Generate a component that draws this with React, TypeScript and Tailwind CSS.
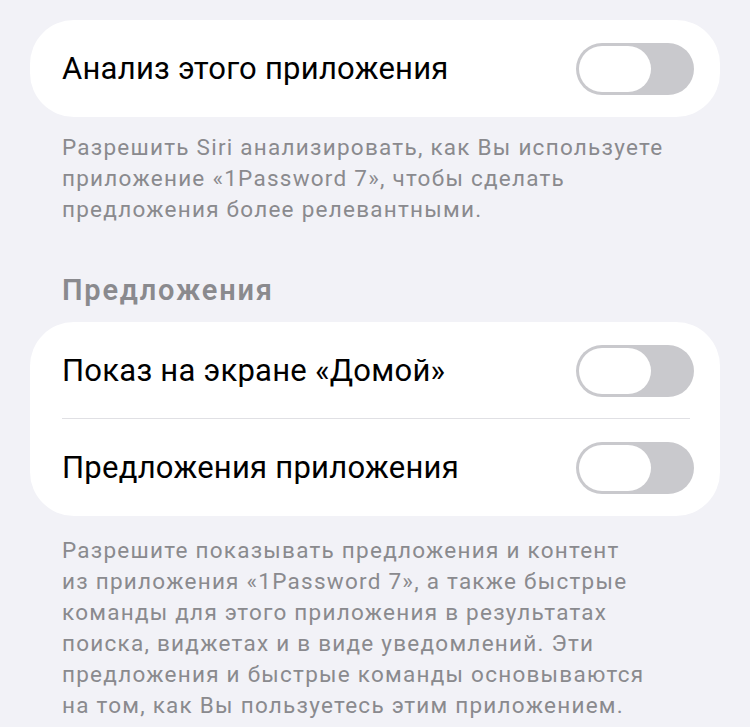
import React from "react";

const font = { fontFamily: "Roboto, 'Noto Sans', sans-serif" };

function Toggle() {
  return (
    <div className="w-[118px] h-[52px] rounded-full bg-[#c9c9cd] p-[3px] flex shrink-0">
      <div className="w-[72px] h-full rounded-full bg-white" />
    </div>
  );
}

function Row({ label, divider }: { label: string; divider?: boolean }) {
  return (
    <div className="relative flex items-center justify-between h-[97px] pl-[32px] pr-[26px]">
      <span className="text-[31px] text-black tracking-[0.25px] pt-[2px]">{label}</span>
      <Toggle />
      {divider && <div className="absolute bottom-0 left-[32px] right-[30px] h-px bg-[#e0e0e4]" />}
    </div>
  );
}

function Footer({ lines }: { lines: string[] }) {
  return (
    <div className="px-[62px] text-[22.5px] leading-[31px] tracking-[1.25px] text-[#8a8a8e]">
      {lines.map((l) => (
        <div key={l}>{l}</div>
      ))}
    </div>
  );
}

export default function App() {
  return (
    <div className="w-[750px] h-[727px] bg-[#f2f2f7] overflow-hidden pt-[20px]" style={font}>
      <div className="mx-[30px] bg-white rounded-[44px] overflow-hidden">
        <Row label="Анализ этого приложения" />
      </div>

      <div className="mt-[15px]">
        <Footer
          lines={[
            "Разрешить Siri анализировать, как Вы используете",
            "приложение «1Password 7», чтобы сделать",
            "предложения более релевантными.",
          ]}
        />
      </div>

      <div className="mt-[49px] px-[62px] text-[29px] leading-[32px] tracking-[1.8px] font-semibold text-[#8a8a8e]">
        Предложения
      </div>

      <div className="mt-[16px] mx-[30px] bg-white rounded-[44px] overflow-hidden">
        <Row label="Показ на экране «Домой»" divider />
        <Row label="Предложения приложения" />
      </div>

      <div className="mt-[19px]">
        <Footer
          lines={[
            "Разрешите показывать предложения и контент",
            "из приложения «1Password 7», а также быстрые",
            "команды для этого приложения в результатах",
            "поиска, виджетах и в виде уведомлений. Эти",
            "предложения и быстрые команды основываются",
            "на том, как Вы пользуетесь этим приложением.",
          ]}
        />
      </div>
    </div>
  );
}
